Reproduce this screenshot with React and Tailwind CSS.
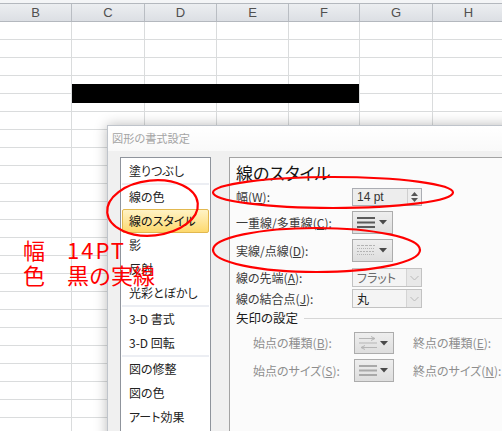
import React from "react";

const cols = [
  { l: "B", w: "w-[72px]" },
  { l: "C", w: "w-[73px]" },
  { l: "D", w: "w-[72px]" },
  { l: "E", w: "w-[72px]" },
  { l: "F", w: "w-[71px]" },
  { l: "G", w: "w-[73px]" },
  { l: "H", w: "w-[72px]" },
];

const rows = Array.from({ length: 24 }, (_, i) => i);

const UI = "font-['Noto_Sans_CJK_JP','Noto_Sans',sans-serif] [font-feature-settings:'palt']";

function Caret({ color = "#4a4a4a" }) {
  return (
    <svg width="8" height="5" viewBox="0 0 8 5">
      <path d="M0 0 H8 L4 4.5 Z" fill={color} />
    </svg>
  );
}

function Chevron() {
  return (
    <svg width="9" height="6" viewBox="0 0 9 6">
      <path d="M0.5 1 L4.5 5 L8.5 1" fill="none" stroke="#b9b9b9" strokeWidth="1" />
    </svg>
  );
}

function LinesIcon({ color = "#5a5a5a" }) {
  return (
    <svg width="18" height="13" viewBox="0 0 18 13">
      <rect x="0" y="1" width="18" height="2" fill={color} />
      <rect x="0" y="5.5" width="18" height="2" fill={color} />
      <rect x="0" y="10" width="18" height="2" fill={color} />
    </svg>
  );
}

function DashIcon() {
  return (
    <svg width="18" height="13" viewBox="0 0 18 13">
      <line x1="0" y1="1.5" x2="18" y2="1.5" stroke="#b3b3b3" strokeWidth="1" strokeDasharray="3 1" />
      <line x1="0" y1="4.5" x2="18" y2="4.5" stroke="#b3b3b3" strokeWidth="1" strokeDasharray="1 1" />
      <line x1="0" y1="7.5" x2="18" y2="7.5" stroke="#b3b3b3" strokeWidth="1" strokeDasharray="2 1" />
      <line x1="0" y1="10.5" x2="18" y2="10.5" stroke="#b3b3b3" strokeWidth="1" strokeDasharray="1 1" />
    </svg>
  );
}

function ArrowsIcon() {
  return (
    <svg width="18" height="14" viewBox="0 0 18 14">
      <g stroke="#b5b5b5" strokeWidth="1" fill="none">
        <line x1="0" y1="2.5" x2="16" y2="2.5" />
        <path d="M12 0.5 L16 2.5 L12 4.5" />
        <line x1="0" y1="7" x2="18" y2="7" />
        <line x1="2" y1="11.5" x2="18" y2="11.5" />
        <path d="M6 9.5 L2 11.5 L6 13.5" />
      </g>
    </svg>
  );
}

function DropButton({ children, caret = "#4a4a4a", h = "h-[23px]", w = "w-[41px]" }) {
  return (
    <div className={`${w} ${h} flex items-center border border-[#acacac] bg-gradient-to-b from-[#eeeeee] to-[#dedede] pl-[4px] pr-[5px] justify-between`}>
      {children}
      <Caret color={caret} />
    </div>
  );
}

function Combo({ text, dim }) {
  return (
    <div className="w-[70px] h-[19px] flex border border-[#c2c2c2] bg-[#f4f4f4]">
      <div className={`flex-1 flex items-center pl-[4px] text-[12px] ${dim ? "text-[#6a6a6a]" : "text-[#222]"}`}>{text}</div>
      <div className="w-[15px] border-l border-[#d4d4d4] bg-[#e8e8e8] flex items-center justify-center">
        <Chevron />
      </div>
    </div>
  );
}

function U({ children }) {
  return <span className="underline underline-offset-[1px]">{children}</span>;
}

const listGroups = [
  ["塗りつぶし"],
  ["線の色", "線のスタイル", "影", "反射", "光彩とぼかし"],
  ["3-D 書式", "3-D 回転"],
  ["図の修整", "図の色", "アート効果"],
];

export default function App() {
  return (
    <div className="relative w-[502px] h-[431px] overflow-hidden bg-white">
      {/* Spreadsheet */}
      <div className="h-[3px] bg-[#f4f5f7]" />
      <div className="flex h-[19px] border-t border-b border-[#b4b8be] bg-gradient-to-b from-[#eceef1] to-[#dcdfe4]">
        {cols.map((c) => (
          <div
            key={c.l}
            className={`${c.w} shrink-0 border-r border-[#b9bdc3] flex items-center justify-center text-[13px] text-[#505050] font-['Liberation_Sans',sans-serif]`}
          >
            {c.l}
          </div>
        ))}
      </div>
      {rows.map((r) => (
        <div key={r} className="flex h-[18px] border-b border-[#dadcdd]">
          {cols.map((c) => (
            <div key={c.l} className={`${c.w} shrink-0 border-r border-[#dadcdd]`} />
          ))}
        </div>
      ))}

      {/* Black line shape */}
      <div className="absolute left-[72px] top-[84px] w-[287px] h-[19px] bg-black" />

      {/* Dialog */}
      <div className={`absolute left-[107px] top-[125px] w-[420px] h-[330px] border border-[#bfc4cb] bg-[#f0f0f0] shadow-[0_0_12px_rgba(0,0,0,0.28)] ${UI}`}>
        <div className="h-[25px] bg-gradient-to-b from-[#ffffff] to-[#f9f9f9] flex items-center pl-[4px] text-[11.2px] text-[#a4a4a4]">
          図形の書式設定
        </div>
        <div className="flex pl-[12px] pt-[6px] gap-[18px]">
          {/* Left list */}
          <div className="w-[91px] h-[300px] shrink-0 border border-[#8f949c] bg-white pt-[1px]">
            {listGroups.map((g, gi) => (
              <div key={gi}>
                {gi > 0 && <div className="h-[2px] mx-[1px] bg-[#eceef3]" />}
                {g.map((item) =>
                  item === "線のスタイル" ? (
                    <div
                      key={item}
                      className="h-[24px] mx-[1px] flex items-center pl-[6px] border border-[#e2b84f] rounded-[2px] bg-gradient-to-b from-[#fff3c4] to-[#fdd96c] text-[12px] text-[#111]"
                    >
                      {item}
                    </div>
                  ) : (
                    <div key={item} className="h-[24px] mx-[1px] flex items-center pl-[6px] border border-transparent text-[12px] text-[#222] whitespace-nowrap">
                      {item}
                    </div>
                  )
                )}
              </div>
            ))}
          </div>

          {/* Right panel */}
          <div className="flex-1 h-[300px] border-l border-t border-[#a3a3a3] bg-[#fbfbfb] pl-[6px]">
            <div className="mt-[4px] h-[22px] leading-[22px] text-[17px] text-[#151515]">線のスタイル</div>

            <div className="mt-[2px] h-[22px] flex items-center">
              <div className="w-[116px] text-[12px] text-[#3a3a3a]">幅(<U>W</U>):</div>
              <div className="w-[70px] h-[18px] flex border border-[#abadb3] bg-[#ededed]">
                <div className="flex-1 flex items-center pl-[4px] text-[12px] text-[#333] font-['Liberation_Sans',sans-serif]">14 pt</div>
                <div className="w-[14px] border-l border-[#cfcfcf] flex flex-col items-center justify-center gap-[2px]">
                  <svg width="7" height="4" viewBox="0 0 7 4"><path d="M0 4 L3.5 0 L7 4 Z" fill="#555" /></svg>
                  <svg width="7" height="4" viewBox="0 0 7 4"><path d="M0 0 L3.5 4 L7 0 Z" fill="#555" /></svg>
                </div>
              </div>
            </div>

            <div className="mt-[3px] h-[23px] flex items-center">
              <div className="w-[116px] text-[12px] text-[#3a3a3a] whitespace-nowrap">一重線/多重線(<U>C</U>):</div>
              <DropButton>
                <LinesIcon />
              </DropButton>
            </div>

            <div className="mt-[5px] h-[23px] flex items-center">
              <div className="w-[116px] text-[12px] text-[#3a3a3a] whitespace-nowrap">実線/点線(<U>D</U>):</div>
              <DropButton>
                <DashIcon />
              </DropButton>
            </div>

            <div className="mt-[6px] h-[19px] flex items-center">
              <div className="w-[116px] text-[12px] text-[#3a3a3a] whitespace-nowrap">線の先端(<U>A</U>):</div>
              <Combo text="フラット" dim />
            </div>

            <div className="mt-[2px] h-[19px] flex items-center">
              <div className="w-[116px] text-[12px] text-[#3a3a3a] whitespace-nowrap">線の結合点(<U>J</U>):</div>
              <Combo text="丸" />
            </div>

            <div className="mt-[1px] h-[18px] flex items-center gap-[6px]">
              <div className="text-[12.5px] text-[#1a1a1a] whitespace-nowrap">矢印の設定</div>
              <div className="flex-1 h-px bg-[#d6d6d6]" />
            </div>

            <div className="mt-[5px] h-[22px] flex items-center text-[12px] text-[#8e8e8e]">
              <div className="w-[118px] pl-[17px] whitespace-nowrap">始点の種類(<U>B</U>):</div>
              <DropButton w="w-[40px]" h="h-[22px]">
                <ArrowsIcon />
              </DropButton>
              <div className="ml-[19px] whitespace-nowrap">終点の種類(<U>E</U>):</div>
            </div>

            <div className="mt-[5px] h-[23px] flex items-center text-[12px] text-[#8e8e8e]">
              <div className="w-[118px] pl-[17px] whitespace-nowrap">始点のサイズ(<U>S</U>):</div>
              <DropButton w="w-[40px]">
                <LinesIcon color="#a9a9a9" />
              </DropButton>
              <div className="ml-[19px] whitespace-nowrap">終点のサイズ(<U>N</U>):</div>
            </div>
          </div>
        </div>
      </div>

      {/* Red annotation text */}
      <div className="absolute left-[23px] top-[237px] text-[22px] leading-[25px] text-[#ff0000] font-['Noto_Sans_CJK_JP',sans-serif] whitespace-pre">
        <div>
          幅　<span className="tracking-[2px]">14PT</span>
        </div>
        <div>色　黒の実線</div>
      </div>

      {/* Red ellipses */}
      <svg className="absolute left-0 top-0 pointer-events-none" width="502" height="431" viewBox="0 0 502 431">
        <g fill="none" stroke="#ff0000" strokeWidth="2.2">
          <ellipse cx="152.5" cy="208" rx="45.5" ry="27.5" transform="rotate(-6 152.5 208)" />
          <ellipse cx="333" cy="192.5" rx="120" ry="15.5" />
          <ellipse cx="316.5" cy="250" rx="103.5" ry="22" />
        </g>
      </svg>
    </div>
  );
}
